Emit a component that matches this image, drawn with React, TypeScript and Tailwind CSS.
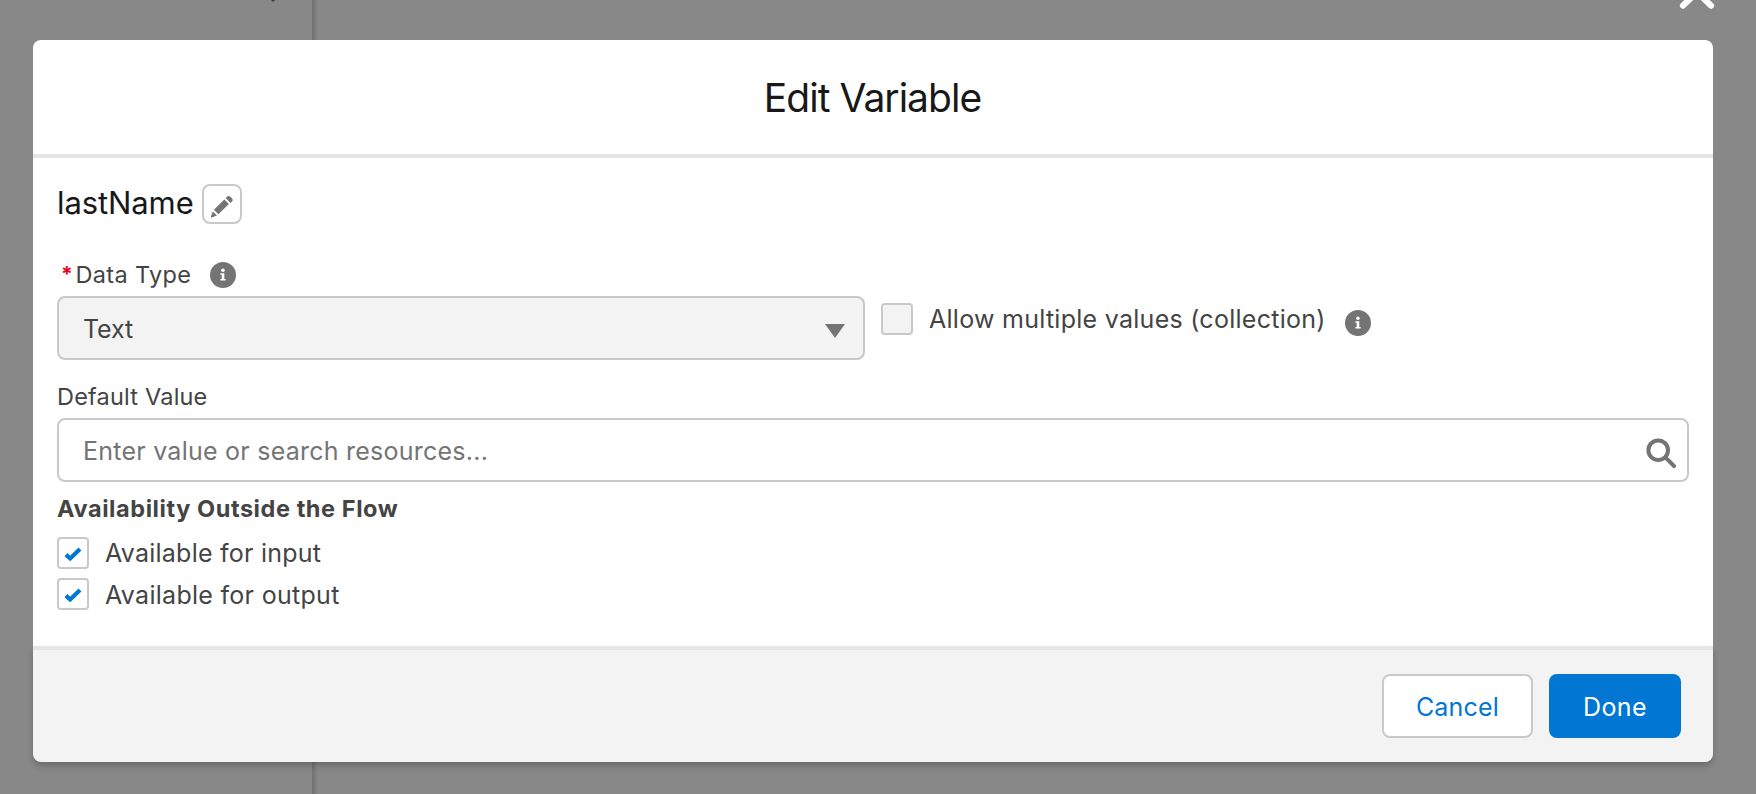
import type { ReactNode } from "react";

function InfoIcon({ className = "" }: { className?: string }) {
  return (
    <svg viewBox="0 0 26 26" className={`size-[26px] shrink-0 ${className}`} aria-label="Help">
      <circle cx="13" cy="13" r="13" fill="#747474" />
      <circle cx="12.9" cy="8.3" r="1.8" fill="#fff" />
      <path d="M10.4 11.2h3.9v5.7h1.3v1.6h-5.2v-1.6h1.3v-4.1h-1.3z" fill="#fff" />
    </svg>
  );
}

function PencilIcon() {
  return (
    <svg viewBox="0 0 24 24" className="relative top-[3px] size-6" fill="#747474">
      <path d="M14.3 4.5 18.9 9 8.4 19.3 3.9 14.8z" />
      <path d="M15.7 3.1l1.6-1.5c.8-.8 2-.8 2.8 0l2 2c.8.8.8 2 0 2.8l-1.7 1.5z" />
      <path d="M2.8 16.4 7 20.6l-5.2 1.9c-.6.2-1.1-.2-.9-.9z" />
    </svg>
  );
}

function Checkbox({ label, checked = false }: { label: ReactNode; checked?: boolean }) {
  return (
    <label className="flex h-8 items-center">
      <span
        className={`flex size-8 shrink-0 items-center justify-center rounded-[4px] border-2 border-[#c9c9c9] ${checked ? "bg-white" : "bg-[#f3f3f3]"}`}
      >
        {checked && (
          <svg viewBox="0 0 28 28" className="size-7" fill="none">
            <path d="M6.9 15.6 11.2 19.5 21 10.1" stroke="#0176d3" strokeWidth="4.2" />
          </svg>
        )}
      </span>
      {label}
    </label>
  );
}

export default function App() {
  return (
    <div className="relative flex h-[794px] w-[1756px] overflow-hidden bg-[#888888] pt-10 pl-[33px] font-['Inter',sans-serif] text-[#444444]">
      <div className="absolute top-0 left-[312px] h-full w-[6px] bg-linear-to-r from-[#707070] to-[#888888]" />
      <svg className="absolute top-0 left-[270px] h-[2px] w-[6px]" viewBox="0 0 6 2">
        <path d="M1 0h4L3.7 1.6H2.3z" fill="#3c3c3c" />
      </svg>
      <svg className="absolute top-0 left-[1676px] h-[12px] w-[42px]" viewBox="0 0 42 12" fill="none">
        <path d="M7 5.6 21-8 35 5.6" stroke="#fff" strokeWidth="6.2" strokeLinecap="round" />
      </svg>

      <section className="relative flex h-[722px] w-[1680px] flex-col">
        <header className="flex h-[118px] items-center justify-center rounded-t-[8px] border-b-4 border-[#e5e5e5] bg-white">
          <h1 className="pt-[2px] pr-[1px] text-[39px] leading-[50px] font-normal tracking-[-0.98px] text-[#181818]">
            Edit Variable
          </h1>
        </header>

        <div className="flex h-[488px] flex-col bg-white px-6 pt-[26px]">
          <div className="flex h-10 items-start">
            <h2 className="w-[145px] pt-[1px] text-[31px] leading-9 font-normal tracking-[-0.1px] text-[#181818]">lastName</h2>
            <button className="flex size-10 items-center justify-center rounded-[8px] border-2 border-[#c9c9c9] bg-white">
              <PencilIcon />
            </button>
          </div>

          <div className="mt-9 flex h-[30px] items-center text-[23.5px]">
            <span className="w-[18.5px] pl-[4px] text-[21px] leading-7 font-bold text-[#ea001e]">*</span>
            <span className="w-[134.5px] pb-[1px] leading-7 tracking-[0.34px]">Data Type</span>
            <InfoIcon />
          </div>

          <div className="mt-[6px] flex items-start">
            <div className="flex h-16 w-[808px] items-center justify-between rounded-[8px] border-2 border-[#c9c9c9] bg-[#f3f3f3] pr-[18px] pl-6">
              <span className="pt-[2px] text-[25px] leading-8 tracking-[-0.11px]">Text</span>
              <svg viewBox="0 0 20 14" className="mt-[6px] h-[14px] w-5">
                <path d="M0 0h20L10 14z" fill="#747474" />
              </svg>
            </div>
            <div className="ml-4 flex pt-[7px]">
              <Checkbox
                label={<span className="w-[432px] pl-4 text-[25px] leading-8 tracking-[0.27px]">Allow multiple values (collection)</span>}
              />
              <InfoIcon className="mt-[7px]" />
            </div>
          </div>

          <div className="mt-[23px] h-[28px] text-[23.5px] leading-[28px] tracking-[0.2px]">Default Value</div>
          <div className="mt-[7px] flex h-16 shrink-0 items-center justify-between rounded-[8px] border-2 border-[#c9c9c9] bg-white pr-[11px] pl-6">
            <span className="pt-[2px] text-[25px] leading-8 tracking-[0.24px] text-[#747474]">
              Enter value or search resources...
            </span>
            <svg viewBox="0 0 30 30" className="mt-[5px] size-[30px]" fill="none" stroke="#747474">
              <circle cx="12.2" cy="12.2" r="9.8" strokeWidth="4" />
              <path d="M19.4 19.4 28 28" strokeWidth="4" strokeLinecap="round" />
            </svg>
          </div>

          <div className="mt-[13px] h-[28px] text-[23.5px] leading-[28px] font-bold tracking-[0.57px]">
            Availability Outside the Flow
          </div>
          <div className="mt-[14px] flex flex-col gap-[9px]">
            <Checkbox checked label={<span className="pl-4 text-[25px] leading-8 tracking-[0.24px]">Available for input</span>} />
            <Checkbox checked label={<span className="pt-[2px] pl-4 text-[25px] leading-8 tracking-[0.29px]">Available for output</span>} />
          </div>
        </div>

        <footer className="flex h-[116px] items-center justify-end gap-4 rounded-b-[8px] border-t-4 border-[#e5e5e5] bg-[#f3f3f3] pr-8 shadow-[0_4px_6px_rgba(0,0,0,0.2)]">
          <button className="flex h-16 w-[151px] items-center justify-center rounded-[8px] border-2 border-[#c9c9c9] bg-white pt-[3px] text-[25px] tracking-[0.21px] text-[#0176d3]">
            Cancel
          </button>
          <button className="flex h-16 w-[132px] items-center justify-center rounded-[8px] bg-[#0176d3] pt-[3px] text-[25px] tracking-[0.4px] text-white">
            Done
          </button>
        </footer>
      </section>
    </div>
  );
}
